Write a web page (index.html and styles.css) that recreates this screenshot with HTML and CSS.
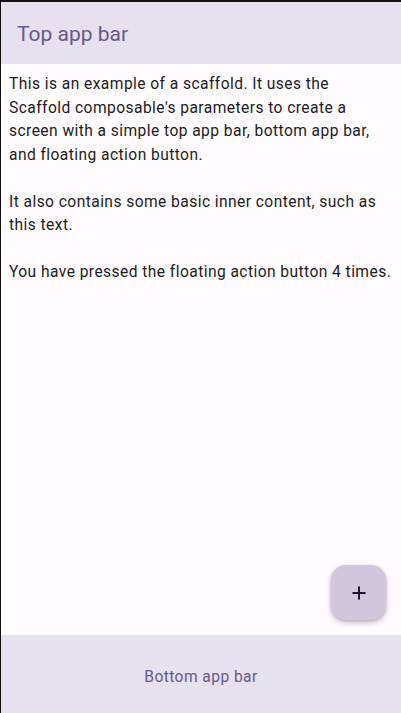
FILE: index.html
```html
<!DOCTYPE html>
<html>
<head>
<meta charset="utf-8">
<link rel="stylesheet" href="styles.css">
</head>
<body>
<div class="screen">
  <header class="top-bar"><h1 class="top-title">Top app bar</h1></header>
  <main class="content">
    <p class="para">This is an example of a scaffold. It uses the Scaffold composable's parameters to create a screen with a simple top app bar, bottom app bar, and floating action button.</p>
    <p class="para">It also contains some basic inner content, such as this text.</p>
    <p class="para">You have pressed the floating action button 4 times.</p>
    <button class="fab" aria-label="Add">
      <svg width="16" height="16" viewBox="0 0 16 16"><path d="M8 1.5v13M1.5 8h13" stroke="#1d1536" stroke-width="2" fill="none"/></svg>
    </button>
  </main>
  <footer class="bottom-bar"><span class="bottom-text">Bottom app bar</span></footer>
</div>
</body>
</html>
```
FILE: styles.css
```css
html, body {
  margin: 0;
  padding: 0;
  height: 100%;
  background: #111111;
}
.screen {
  box-sizing: border-box;
  height: 100vh;
  margin-left: 1px;
  padding-top: 2px;
  display: flex;
  flex-direction: column;
  font-family: Roboto, "Noto Sans", sans-serif;
}
.top-bar {
  height: 62px;
  flex: none;
  background: #e7e0ef;
  display: flex;
  align-items: center;
  padding-left: 16px;
}
.top-title {
  margin: 0;
  font-weight: 400;
  font-size: 21px;
  color: #655a8b;
  letter-spacing: 0;
  position: relative;
  top: 1px;
}
.content {
  flex: 1;
  position: relative;
  background: #fffbfe;
  padding: 9px 7px 0 8px;
}
.para {
  margin: 0 0 23.5px 0;
  font-size: 15.6px;
  line-height: 23.5px;
  letter-spacing: 0.43px;
  color: #1c1b1f;
}
.fab {
  position: absolute;
  right: 15px;
  bottom: 15px;
  width: 55px;
  height: 55px;
  border: none;
  border-radius: 15px;
  background: #d0c7df;
  box-shadow: 0 3px 6px rgba(0,0,0,0.22), 0 1px 3px rgba(0,0,0,0.15);
  display: flex;
  align-items: center;
  justify-content: center;
  padding: 0;
}
.bottom-bar {
  height: 78px;
  flex: none;
  background: #e7e0ef;
  display: flex;
  align-items: center;
  justify-content: center;
  padding-top: 6px;
  box-sizing: border-box;
}
.bottom-text {
  font-size: 15.6px;
  color: #655a8b;
  letter-spacing: 0.43px;
}
```
